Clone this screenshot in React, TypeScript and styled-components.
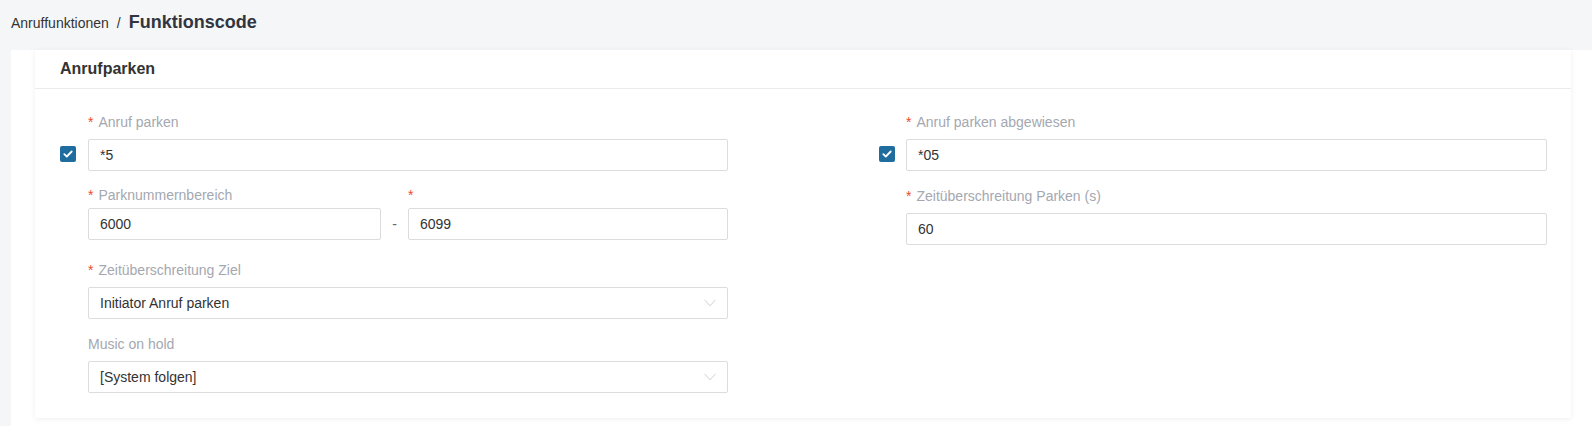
import styled, {createGlobalStyle} from "styled-components";

const GlobalStyle = createGlobalStyle`
    html, body {
        margin: 0;
        padding: 0;
        background: #f5f6f8;
        font-family: "Liberation Sans", Arial, sans-serif;
        overflow: hidden;
    }
    * {
        box-sizing: border-box;
    }
`

const Breadcrumb = styled.div`
    height: 50px;
    padding: 0 0 6px 11px;
    display: flex;
    align-items: center;
`

const Crumbs = styled.div`
    display: flex;
    align-items: baseline;
    color: #333;
`

const CrumbLink = styled.span`
    font-size: 14px;
`

const CrumbSep = styled.span`
    font-size: 14px;
    margin: 0 8px 0 8px;
`

const CrumbCurrent = styled.span`
    font-size: 18px;
    font-weight: bold;
    color: #303540;
`

const Panel = styled.div`
    margin-left: 11px;
    padding: 0 21px 0 24px;
    background: #fff;
    height: calc(100vh - 50px);
`

const Card = styled.section`
    background: #fff;
    box-shadow: 0 1px 6px rgba(0, 0, 0, 0.07);
    padding-bottom: 25px;
`

const CardHeader = styled.header`
    height: 39px;
    padding-left: 25px;
    display: flex;
    align-items: center;
    font-size: 16px;
    font-weight: bold;
    color: #333;
    border-bottom: 1px solid #ebebeb;
`

const CardBody = styled.div`
    display: grid;
    grid-template-columns: 668px 668px;
    justify-content: space-between;
    padding: 23px 24px 0 25px;
`

const Column = styled.div<{ indent: number }>`
    display: flex;
    flex-direction: column;

    --indent: ${({indent}) => indent}px;
`

const Item = styled.div<{ top?: number }>`
    margin-top: ${({top}) => top ?? 0}px;
    display: flex;
    flex-direction: column;
`

const Label = styled.label<{ gap?: number }>`
    display: block;
    height: 20px;
    line-height: 20px;
    margin-bottom: ${({gap}) => gap ?? 7}px;
    padding-left: var(--indent);
    font-size: 14px;
    color: #a4a8b0;
    white-space: nowrap;
`

const Req = styled.span`
    color: #ef4b2c;
    margin-right: 5px;
`

const ControlRow = styled.div`
    display: flex;
    align-items: center;
`

const Gutter = styled.div`
    width: var(--indent);
    flex: none;
    display: flex;
    align-items: center;
`

const Check = styled.span`
    width: 16px;
    height: 16px;
    border-radius: 2px;
    background: #1f6c9e;
    display: flex;
    align-items: center;
    justify-content: center;
    margin-top: -2px;
`

const Input = styled.div`
    flex: 1 0 32px;
    min-width: 0;
    height: 32px;
    border: 1px solid #dcdcdf;
    border-radius: 2px;
    padding: 0 11px;
    display: flex;
    align-items: center;
    font-size: 14px;
    color: #333;
    background: #fff;
`

const Select = styled(Input)`
    justify-content: space-between;
    padding-right: 11px;
`

const RangeGrid = styled.div`
    display: grid;
    grid-template-columns: 293px 27px 1fr;
    padding-left: var(--indent);
`

const RangeCell = styled.div`
    display: flex;
    flex-direction: column;
`

const Dash = styled.div`
    align-self: end;
    height: 32px;
    line-height: 32px;
    text-align: center;
    font-size: 14px;
    color: #666;
`

const RangeLabel = styled(Label)`
    padding-left: 0;
`

const CheckMark = () => (
    <svg width="10" height="8" viewBox="0 0 10 8">
        <polyline points="1.3,4.2 3.8,6.5 8.7,1.5" fill="none" stroke="#fff" strokeWidth="1.8"
                  strokeLinecap="round" strokeLinejoin="round"/>
    </svg>
)

const Chevron = () => (
    <svg width="12" height="8" viewBox="0 0 12 8">
        <polyline points="0.5,0.8 6,6.8 11.5,0.8" fill="none" stroke="#cfcfcf" strokeWidth="1"/>
    </svg>
)

export default function App() {
    return (
        <>
            <GlobalStyle/>
            <Breadcrumb>
                <Crumbs>
                    <CrumbLink>Anruffunktionen</CrumbLink>
                    <CrumbSep>/</CrumbSep>
                    <CrumbCurrent>Funktionscode</CrumbCurrent>
                </Crumbs>
            </Breadcrumb>
            <Panel>
                <Card>
                    <CardHeader>Anrufparken</CardHeader>
                    <CardBody>
                        <Column indent={28}>
                            <Item>
                                <Label><Req>*</Req>Anruf parken</Label>
                                <ControlRow>
                                    <Gutter><Check><CheckMark/></Check></Gutter>
                                    <Input>*5</Input>
                                </ControlRow>
                            </Item>
                            <Item top={14}>
                                <RangeGrid>
                                    <RangeCell>
                                        <RangeLabel gap={3}><Req>*</Req>Parknummernbereich</RangeLabel>
                                        <Input>6000</Input>
                                    </RangeCell>
                                    <Dash>-</Dash>
                                    <RangeCell>
                                        <RangeLabel gap={3}><Req>*</Req></RangeLabel>
                                        <Input>6099</Input>
                                    </RangeCell>
                                </RangeGrid>
                            </Item>
                            <Item top={20}>
                                <Label><Req>*</Req>Zeitüberschreitung Ziel</Label>
                                <ControlRow>
                                    <Gutter/>
                                    <Select>Initiator Anruf parken<Chevron/></Select>
                                </ControlRow>
                            </Item>
                            <Item top={15}>
                                <Label>Music on hold</Label>
                                <ControlRow>
                                    <Gutter/>
                                    <Select>[System folgen]<Chevron/></Select>
                                </ControlRow>
                            </Item>
                        </Column>
                        <Column indent={27}>
                            <Item>
                                <Label><Req>*</Req>Anruf parken abgewiesen</Label>
                                <ControlRow>
                                    <Gutter><Check><CheckMark/></Check></Gutter>
                                    <Input>*05</Input>
                                </ControlRow>
                            </Item>
                            <Item top={15}>
                                <Label><Req>*</Req>Zeitüberschreitung Parken (s)</Label>
                                <ControlRow>
                                    <Gutter/>
                                    <Input>60</Input>
                                </ControlRow>
                            </Item>
                        </Column>
                    </CardBody>
                </Card>
            </Panel>
        </>
    );
}
